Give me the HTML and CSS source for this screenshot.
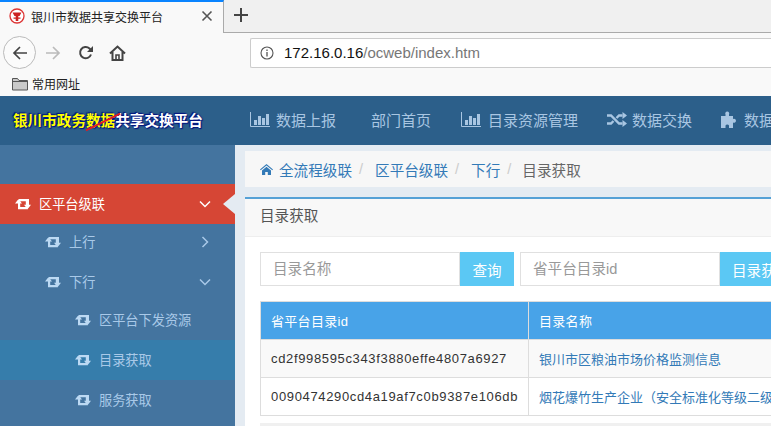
FILE: index.html
```html
<!DOCTYPE html>
<html lang="zh">
<head>
  <meta charset="UTF-8">
  <title>银川市数据共享交换平台</title>
  <link rel="stylesheet" href="styles.css">
</head>
<body>

<div class="browser">
  <div class="tabstrip">
    <div class="tab">
      <svg class="favicon" width="16" height="16" viewBox="0 0 16 16"><circle cx="8" cy="8" r="7" fill="#fff" stroke="#d33" stroke-width="1.3"/><path d="M3.500 4.500h9L10.500 8H9.300v1.500h2.200v1.200H9.300V13H6.700v-2.300H4.500V9.500h2.200V8H5.500z" fill="#c22"/></svg>
      <span class="tab-title">银川市数据共享交换平台</span>
      <svg class="tab-close" width="12" height="12" viewBox="0 0 12 12"><path d="M1.500 1.500l9 9M10.500 1.500l-9 9" stroke="#555" stroke-width="1.600"/></svg>
    </div>
    <div class="newtab">
      <svg width="14" height="14" viewBox="0 0 14 14"><path d="M7 0v14M0 7h14" stroke="#444" stroke-width="2"/></svg>
    </div>
  </div>
  <div class="toolbar">
    <div class="back">
      <svg width="16" height="16" viewBox="0 0 16 16"><path d="M15 8H2M8 2L2 8l6 6" fill="none" stroke="#444" stroke-width="1.700"/></svg>
    </div>
    <svg class="tool-forward" width="16" height="16" viewBox="0 0 16 16"><path d="M1 8h13M8 2l6 6-6 6" fill="none" stroke="#bbb" stroke-width="1.700"/></svg>
    <svg class="tool-reload" width="16" height="16" viewBox="0 0 16 16"><path d="M13 9.500A5.600 5.600 0 1 1 11.500 3.500L14 6" fill="none" stroke="#444" stroke-width="2"/><path d="M15 1v6H9z" fill="#444"/></svg>
    <svg class="tool-home" width="17" height="16" viewBox="0 0 17 16"><path d="M1 8.500l7.500-7L16 8.500M3.500 7v8h10V7" fill="none" stroke="#444" stroke-width="2"/><path d="M7 15v-5h3v5" fill="none" stroke="#444" stroke-width="1.600"/></svg>
    <div class="urlbar">
      <svg width="14" height="14" viewBox="0 0 14 14"><circle cx="7" cy="7" r="6" fill="none" stroke="#555" stroke-width="1.100"/><path d="M7 6v4.500M7 3.400v1.500" stroke="#555" stroke-width="1.300"/></svg>
      <span class="url"><span class="url-host">172.16.0.16</span>/ocweb/index.htm</span>
    </div>
  </div>
  <div class="bookmarks">
    <svg width="16" height="14" viewBox="0 0 16 14"><path d="M.5 13V1.500h5l1.500 2h8.500V13z" fill="#c9c9c9" stroke="#555"/><path d="M.5 4.500h15" stroke="#555"/></svg>
    <span>常用网址</span>
  </div>
</div>

<svg class="icon-defs" width="0" height="0">
  <symbol id="retweet" viewBox="0 0 16 12"><path d="M0 5.500L3.500 1 7 5.500H5.200V9H11L13 11.200H3V5.500ZM16 6.700L12.500 11.200 9 6.700H10.800V3.200H5L3 1H14V6.700Z" fill="currentColor"/></symbol>
  <symbol id="bars" viewBox="0 0 20 15"><path d="M.5 0v14.500H20" fill="none" stroke="currentColor"/><path d="M4 8h3v5H4zM8 4h3v9H8zM12 6h3v7h-3zM16 2h3v11h-3z" fill="currentColor"/></symbol>
</svg>

<header class="topbar">
  <div class="brand"><span class="brand-yellow">银川市政务<span class="brand-struck">数据</span></span>共享交换平台</div>
  <nav class="topnav">
    <a class="topnav-item"><svg class="topnav-icon" width="20" height="15"><use href="#bars"/></svg>数据上报</a>
    <a class="topnav-item">部门首页</a>
    <a class="topnav-item"><svg class="topnav-icon" width="20" height="15"><use href="#bars"/></svg>目录资源管理</a>
    <a class="topnav-item"><svg class="topnav-icon" width="20" height="15" viewBox="0 0 20 15"><path d="M0 3.500h4l8 8h3.500M0 11.500h4l2.500-2.500M9.500 6L12 3.500h3.500" fill="none" stroke="currentColor" stroke-width="2.400"/><path d="M15.500 0l4.500 3.500-4.500 3.500zM15.500 8l4.500 3.500-4.500 3.500z" fill="currentColor"/></svg>数据交换</a>
    <a class="topnav-item"><svg class="topnav-icon" width="17" height="17" viewBox="0 0 17 17"><path d="M0 5h4.500V3.500a2 2 0 1 1 3.500 0V5h4v3a2 2 0 1 1 0 3.500V17H8v-2.500a2 2 0 0 0-3.500 0V17H0z" fill="currentColor"/></svg>数据</a>
  </nav>
</header>

<div class="layout">
  <aside class="sidebar">
    <a class="menu-item menu-active">
      <svg class="menu-icon" width="16" height="12"><use href="#retweet"/></svg>区平台级联
      <svg class="chevron" width="12" height="8" viewBox="0 0 12 8"><path d="M1 1.500l5 5 5-5" fill="none" stroke="currentColor" stroke-width="1.500"/></svg>
    </a>
    <a class="menu-item level-2 menu-up">
      <svg class="menu-icon" width="16" height="12"><use href="#retweet"/></svg>上行
      <svg class="chevron chevron-right" width="8" height="12" viewBox="0 0 8 12"><path d="M1.500 1l5 5-5 5" fill="none" stroke="currentColor" stroke-width="1.500"/></svg>
    </a>
    <a class="menu-item level-2 menu-down">
      <svg class="menu-icon" width="16" height="12"><use href="#retweet"/></svg>下行
      <svg class="chevron chevron-down" width="12" height="8" viewBox="0 0 12 8"><path d="M1 1.500l5 5 5-5" fill="none" stroke="currentColor" stroke-width="1.500"/></svg>
    </a>
    <a class="menu-item level-3"><svg class="menu-icon" width="16" height="12"><use href="#retweet"/></svg>区平台下发资源</a>
    <a class="menu-item level-3 menu-current"><svg class="menu-icon" width="16" height="12"><use href="#retweet"/></svg>目录获取</a>
    <a class="menu-item level-3"><svg class="menu-icon" width="16" height="12"><use href="#retweet"/></svg>服务获取</a>
  </aside>

  <main class="content">
    <div class="crumbs">
      <svg class="crumb-home" width="13" height="11" viewBox="0 0 13 11"><path d="M6.500 0L13 5.500l-.7.8L6.500 1.500.7 6.300 0 5.500zM2 6.500l4.500-3.800L11 6.500V11H7.800V8H5.200v3H2z" fill="#337ab7"/></svg>
      <a>全流程级联</a><span class="crumb-sep">/</span>
      <a>区平台级联</a><span class="crumb-sep">/</span>
      <a>下行</a><span class="crumb-sep">/</span>
      <span class="crumb-last">目录获取</span>
    </div>

    <section class="panel">
      <div class="panel-head">目录获取</div>
      <div class="panel-body">
        <div class="search">
          <div class="search-group">
            <div class="search-input">目录名称</div>
            <button class="search-btn btn-query">查询</button>
          </div>
          <div class="search-group">
            <div class="search-input">省平台目录id</div>
            <button class="search-btn btn-fetch">目录获取</button>
          </div>
        </div>
        <table class="grid">
          <tr><th class="col-id">省平台目录id</th><th>目录名称</th></tr>
          <tr class="row-odd"><td class="cell-id">cd2f998595c343f3880effe4807a6927</td><td><a>银川市区粮油市场价格监测信息</a></td></tr>
          <tr><td class="cell-id">0090474290cd4a19af7c0b9387e106db</td><td><a>烟花爆竹生产企业（安全标准化等级二级以上）</a></td></tr>
        </table>
        <div class="pager"></div>
      </div>
    </section>
  </main>
</div>

</body>
</html>
```

FILE: styles.css
```css
html, body {
  margin: 0;
  height: 426px;
  overflow: hidden;
}
body {
  width: 771px;
  font-family: "Liberation Sans", "Noto Sans CJK SC", sans-serif;
  font-size: 14.6px;
  background-color: #e4ebf2;
}
a {
  text-decoration: none;
}
.icon-defs {
  display: block;
  height: 0;
}

/* browser chrome */
.browser {
  height: 96px;
  background-color: #f9f9f9;
  color: #222;
}
.tabstrip {
  display: flex;
  height: 33px;
  background-color: #f0f0f0;
  border-bottom: 1px solid #aaa;
  box-sizing: border-box;
}
.tab {
  width: 224px;
  height: 33px;
  background-color: #f9f9f9;
  border-top: 2px solid #0a84ff;
  border-right: 1px solid #aaa;
  display: flex;
  align-items: center;
  padding: 0 10px 3px 9px;
  box-sizing: border-box;
  font-size: 12px;
}
.favicon {
  margin-right: 6px;
}
.tab-title {
  flex: 1;
}
.newtab {
  width: 34px;
  padding-bottom: 3px;
  box-sizing: border-box;
  display: flex;
  align-items: center;
  justify-content: center;
}
.toolbar {
  display: flex;
  align-items: center;
  height: 39px;
}
.back {
  width: 33px;
  height: 33px;
  margin-left: 3px;
  border: 1px solid #bbb;
  border-radius: 50%;
  box-sizing: border-box;
  background-color: #fbfbfb;
  display: flex;
  align-items: center;
  justify-content: center;
}
.tool-forward {
  margin-left: 9px;
}
.tool-reload {
  margin-left: 17px;
}
.tool-home {
  margin-left: 15px;
}
.urlbar {
  margin-left: 124px;
  flex: 1;
  height: 30px;
  border: 1px solid #ccc;
  border-right: 0;
  border-radius: 2px 0 0 2px;
  background-color: #fff;
  box-sizing: border-box;
  display: flex;
  align-items: center;
  padding-left: 9px;
}
.url {
  margin-left: 10px;
  font-size: 15px;
  color: #777;
}
.url-host {
  color: #111;
}
.bookmarks {
  display: flex;
  align-items: center;
  height: 24px;
  padding: 0 0 1px 12px;
  box-sizing: border-box;
  font-size: 12px;
}
.bookmarks svg {
  margin-right: 4px;
}

/* site header */
.topbar {
  display: flex;
  align-items: center;
  height: 49px;
  padding-bottom: 3px;
  box-sizing: border-box;
  background-color: #2c5f8a;
}
.brand {
  width: 250px;
  flex-shrink: 0;
  padding-left: 13px;
  box-sizing: border-box;
  font-size: 14.6px;
  font-weight: bold;
  color: #fff;
  white-space: nowrap;
  text-shadow: 0 0 2px #00137f, 1px 1px 1px #00137f, -1px -1px 1px #00137f;
}
.brand-yellow {
  color: #ff0;
}
.brand-struck {
  position: relative;
}
.brand-struck::after {
  content: "";
  position: absolute;
  left: -2px;
  top: 50%;
  width: 38px;
  height: 2px;
  background-color: #e01b24;
  transform: rotate(-26deg);
}
.topnav {
  display: flex;
  white-space: nowrap;
  font-size: 15px;
}
.topnav-item {
  display: flex;
  align-items: center;
  color: #a9c6e2;
  margin-right: 30px;
}
.topnav-item:first-child {
  margin-right: 35px;
}
.topnav-item:nth-child(3), .topnav-item:nth-child(4) {
  margin-right: 29px;
}
.topnav-icon {
  margin-right: 6px;
}
.topnav-item:nth-child(3) .topnav-icon {
  margin-right: 7px;
}
.topnav-item:nth-child(4) .topnav-icon {
  margin-right: 5px;
}

/* layout */
.layout {
  display: flex;
  height: 281px;
}
.sidebar {
  width: 235px;
  flex-shrink: 0;
  padding-top: 39px;
  background-color: #44749f;
  box-sizing: border-box;
}
.menu-item {
  position: relative;
  display: flex;
  align-items: center;
  height: 40px;
  padding-bottom: 1px;
  box-sizing: border-box;
  font-size: 13.2px;
  color: #a9c9e8;
}
.menu-icon {
  margin-right: 8px;
  color: #bcd9f3;
}
.menu-active {
  padding-left: 15px;
  background-color: #d64635;
  color: #fff;
}
.menu-active .menu-icon {
  color: #fff;
}
.menu-active::after {
  content: "";
  position: absolute;
  right: 0;
  top: 10px;
  border: 10px solid transparent;
  border-left: 0;
  border-right: 12px solid #e4ebf2;
}
.level-2 {
  padding-left: 45px;
}
.level-3 {
  padding-left: 75px;
}
.menu-up {
  height: 36px;
}
.menu-down {
  padding-top: 4px;
}
.menu-current {
  background-color: #367dab;
}
.chevron {
  position: absolute;
  right: 24px;
  top: 16px;
}
.chevron-right {
  right: 26px;
  top: 12px;
}
.chevron-down {
  top: 18px;
}

/* main area */
.content {
  flex: 1;
  min-width: 0;
  padding: 6px 0 0 10px;
}
.crumbs {
  display: flex;
  align-items: center;
  height: 36px;
  padding-left: 15px;
  background-color: #f7f7f7;
  color: #337ab7;
  white-space: nowrap;
}
.crumb-home {
  margin-right: 6px;
}
.crumb-sep {
  color: #ccc;
  margin: 0 12px 0 7px;
}
.crumb-last {
  margin-left: -1px;
  color: #666;
}
.panel {
  margin-top: 10px;
  border-top: 2px solid #55a1d6;
  background-color: #fff;
}
.panel-head {
  height: 37px;
  line-height: 35px;
  padding-left: 15px;
  background-color: #f8f8f8;
  border-bottom: 1px solid #eee;
  color: #555;
}
.panel-body {
  padding: 15px 0 0 15px;
}
.search {
  display: flex;
  gap: 6px;
  white-space: nowrap;
}
.search-group {
  display: flex;
}
.search-input {
  width: 200px;
  height: 34px;
  line-height: 32px;
  border: 1px solid #e0e0e0;
  box-sizing: border-box;
  padding-left: 12px;
  color: #999;
}
.search-btn {
  height: 34px;
  border: none;
  padding: 0;
  background-color: #5bc8f4;
  color: #fff;
  font: inherit;
}
.btn-query {
  width: 54px;
}
.btn-fetch {
  width: 84px;
  padding-left: 12px;
  text-align: left;
}
.grid {
  margin-top: 15px;
  width: 640px;
  border-collapse: collapse;
  table-layout: fixed;
}
.grid th, .grid td {
  height: 38px;
  padding: 0 10px;
  border: 1px solid #ddd;
  box-sizing: border-box;
  text-align: left;
  font-weight: normal;
  white-space: nowrap;
  overflow: hidden;
  font-size: 13px;
  color: #333;
}
.grid th {
  background-color: #48a3e8;
  color: #fff;
  letter-spacing: .3px;
}
.col-id {
  width: 268px;
}
.grid .cell-id {
  letter-spacing: .65px;
}
.grid a {
  color: #337ab7;
}
.row-odd td {
  background-color: #f9f9f9;
}
.pager {
  margin-top: 7px;
  height: 20px;
  background-color: #f0f0f0;
}
```
